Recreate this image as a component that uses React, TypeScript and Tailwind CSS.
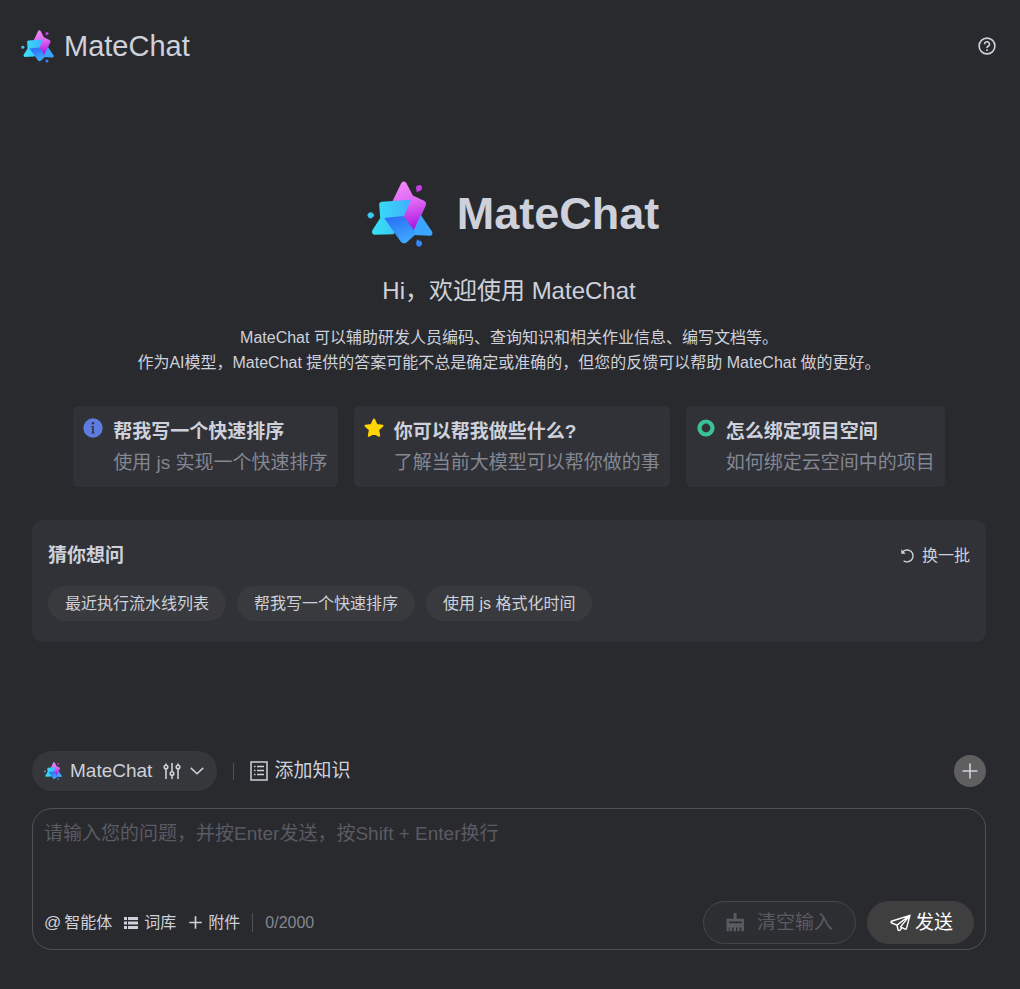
import { useId, useState } from "react";
import type { ReactNode } from "react";

function Logo({ className }: { className: string }) {
  const id = useId();
  return (
    <svg viewBox="0 0 198 200" className={className} aria-hidden="true">
      <defs>
        <linearGradient id={`${id}p`} gradientUnits="userSpaceOnUse" x1="105" y1="0" x2="140" y2="152">
          <stop offset="0" stopColor="#f488fc" />
          <stop offset="0.45" stopColor="#dd66f3" />
          <stop offset="1" stopColor="#a40fdf" />
        </linearGradient>
        <linearGradient id={`${id}c`} x1="0" y1="0" x2="1" y2="0">
          <stop offset="0" stopColor="#36e3f5" />
          <stop offset="1" stopColor="#3fb0fd" />
        </linearGradient>
        <linearGradient id={`${id}b`} x1="0.2" y1="0" x2="0.6" y2="1">
          <stop offset="0" stopColor="#2a6df5" />
          <stop offset="1" stopColor="#3ea9ff" />
        </linearGradient>
      </defs>
      <path
        d="M74 66 L103 6 Q110 -3 118 6 L138 44 L172 60 Q181 65 177 74 L142 152 L106 108 Z"
        fill={`url(#${id}p)`}
      />
      <path d="M36 72 Q36 64 44 63 L132 57 L110 110 L80 161 L22 163 Q12 161 15 150 L39 112 Z" fill={`url(#${id}c)`} />
      <path d="M162 103 L196 153 Q200 165 190 166 L138 164 L140 150 Z" fill="#3ba5ff" />
      <path d="M51 112 L110 106 L142 151 L144 164 L119 186 Q110 192 102 185 Z" fill={`url(#${id}b)`} />
      <path d="M148 17 Q150 12 158 12 Q167 13 166 23 Q164 31 156 31 L150 34 Q147 26 148 17 Z" fill="#c63bea" />
      <path d="M0 104 Q2 95 12 95 Q18 97 21 104 Q18 112 11 114 Q2 113 0 104 Z" fill="#3ac8f5" />
      <path d="M151 176 L155 180 Q166 180 166 190 Q164 199 156 199 Q147 197 148 187 Z" fill="#3488fb" />
    </svg>
  );
}

function InfoIcon() {
  return (
    <svg viewBox="0 0 20 20" className="size-5" aria-hidden="true">
      <circle cx="10" cy="10" r="9.7" fill="#5e7ce0" />
      <circle cx="10" cy="5.300" r="1.200" fill="#313237" />
      <path d="M8.300 8h2.500v6.600h.9v.9H8.300v-.9h.9V8.900h-.9z" fill="#313237" />
    </svg>
  );
}

function StarIcon() {
  return (
    <svg viewBox="0 0 20 20" className="size-5" aria-hidden="true">
      <path
        d="M10 1.500l2.500 5.400 6 .8-4.400 4.100 1.100 6-5.200-2.900-5.200 2.900 1.100-6L1.500 7.700l6-.8z"
        fill="#ffd500"
        stroke="#ffd500"
        strokeWidth="2"
        strokeLinejoin="round"
      />
    </svg>
  );
}

function RingIcon() {
  return (
    <svg viewBox="0 0 20 20" className="size-5" aria-hidden="true">
      <circle cx="10" cy="10" r="6.500" fill="none" stroke="#3ac295" strokeWidth="4.200" />
    </svg>
  );
}

function Glyph({ className, children }: { className: string; children: ReactNode }) {
  return (
    <svg
      viewBox="0 0 18 18"
      className={className}
      fill="none"
      stroke="currentColor"
      strokeWidth="1.600"
      aria-hidden="true"
    >
      {children}
    </svg>
  );
}

const cards = [
  { title: "帮我写一个快速排序", desc: "使用 js 实现一个快速排序", icon: <InfoIcon /> },
  { title: "你可以帮我做些什么?", desc: "了解当前大模型可以帮你做的事", icon: <StarIcon /> },
  { title: "怎么绑定项目空间", desc: "如何绑定云空间中的项目", icon: <RingIcon /> },
];

const prompts = ["最近执行流水线列表", "帮我写一个快速排序", "使用 js 格式化时间"];

export default function App() {
  const [text, setText] = useState("");
  return (
    <div className="flex min-h-screen flex-col bg-[#292a2e] font-['Liberation_Sans','Noto_Sans_CJK_SC',sans-serif] text-base text-[#ced1db]">
      <header className="flex items-center justify-between pt-[25px] pr-6 pb-[23px] pl-[21px]">
        <a href="#" className="flex items-center gap-[10px]">
          <Logo className="size-[33px]" />
          <span className="text-[29px] leading-[42px]">MateChat</span>
        </a>
        <button type="button" aria-label="帮助">
          <Glyph className="size-[18px]">
            <circle cx="9" cy="9" r="7.900" />
            <path d="M6.600 7.200a2.400 2.400 0 1 1 3.400 2.100c-.7.400-1 .8-1 1.800M9 12.200v1.700" />
          </Glyph>
        </button>
      </header>

      <main className="flex flex-1 flex-col pt-[91px] pr-[34px] pl-8">
        <div className="flex items-center justify-center gap-6 pl-2">
          <Logo className="size-[66px]" />
          <h1 className="text-[45px] leading-[66px] font-bold">MateChat</h1>
        </div>
        <h2 className="mt-[26px] text-center text-2xl leading-9">Hi，欢迎使用 MateChat</h2>
        <div className="mt-4 text-center leading-[25px]">
          <p>MateChat 可以辅助研发人员编码、查询知识和相关作业信息、编写文档等。</p>
          <p>作为AI模型，MateChat 提供的答案可能不总是确定或准确的，但您的反馈可以帮助 MateChat 做的更好。</p>
        </div>

        <div className="mt-[31px] flex flex-wrap justify-center gap-4">
          {cards.map((c) => (
            <button
              key={c.title}
              type="button"
              className="flex items-start gap-[10px] rounded-[5px] bg-[#313237] px-[10px] pt-[10px] pb-[9px] text-left text-[19px] leading-[31px]"
            >
              <span className="mt-[2px]">{c.icon}</span>
              <span className="flex flex-col">
                <span className="font-bold">{c.title}</span>
                <span className="text-[#838791]">{c.desc}</span>
              </span>
            </button>
          ))}
        </div>

        <section className="mt-[33px] rounded-[10px] bg-[#313237] px-4 pt-[21px] pb-[21px]">
          <div className="flex items-center justify-between leading-[30px]">
            <h3 className="text-[19px] font-bold">猜你想问</h3>
            <button type="button" className="flex items-center gap-[6px]">
              <Glyph className="size-4">
                <path d="M4 14.300a6.700 6.700 0 1 0-.6-10.300L2.200 5.500" />
                <path d="M1.500 1.500v5h5z" fill="currentColor" stroke="none" />
              </Glyph>
              换一批
            </button>
          </div>
          <div className="mt-[15px] flex flex-wrap gap-[11px]">
            {prompts.map((p) => (
              <button key={p} type="button" className="rounded-full bg-[#393a3d] px-[17px] leading-[35px]">
                {p}
              </button>
            ))}
          </div>
        </section>
      </main>

      <footer className="pt-6 pr-[34px] pb-[39px] pl-8">
        <div className="flex items-center justify-between text-[19px] leading-10">
          <div className="flex items-center">
            <button type="button" className="flex items-center rounded-full bg-[#36373a] px-3">
              <Logo className="size-[18px]" />
              <span className="ml-2">MateChat</span>
              <Glyph className="ml-[11px] size-[18px]">
                <path d="M3 1.500v1.500M3 7v10M9 1v8.500M9 13.500v3.500M15 1.500v1.500M15 7v10" />
                <circle cx="3" cy="5" r="1.800" />
                <circle cx="9" cy="11.500" r="1.800" />
                <circle cx="15" cy="5" r="1.800" />
              </Glyph>
              <Glyph className="ml-2 size-4">
                <path d="M2 5.500l7 6.500 7-6.500" />
              </Glyph>
            </button>
            <span className="mx-4 h-[17px] w-px bg-[#505155]" />
            <button type="button" className="flex items-center gap-[6px]">
              <svg viewBox="0 0 18 20" className="h-5 w-[18px]" fill="none" stroke="currentColor" strokeWidth="1.500" aria-hidden="true">
                <path d="M1 1h16v18H1zM4 5.500h1.500M7 5.500h7M4 9.500h1.500M7 9.500h7M4 13.500h1.500M7 13.500h7" />
              </svg>
              添加知识
            </button>
          </div>
          <button
            type="button"
            aria-label="新建对话"
            className="flex size-8 items-center justify-center rounded-full bg-[#5f5f60]"
          >
            <Glyph className="size-[18px]">
              <path d="M9 1.500v15M1.500 9h15" />
            </Glyph>
          </button>
        </div>

        <div className="mt-[17px] flex flex-col rounded-[20px] border border-[#505155] px-[11px] pt-[11px] pb-[5px]">
          <textarea
            aria-label="输入问题"
            maxLength={2000}
            value={text}
            onChange={(e) => setText(e.target.value)}
            placeholder="请输入您的问题，并按Enter发送，按Shift + Enter换行"
            className="block h-[81px] w-full resize-none bg-transparent text-[19px] leading-7 outline-none placeholder:text-[#5a5b62]"
          />
          <div className="flex items-center justify-between">
            <div className="flex items-center gap-3">
              <button type="button" className="flex items-center gap-[3px]">
                <span className="text-[17px]">@</span>智能体
              </button>
              <button type="button" className="flex items-center gap-[5px]">
                <svg viewBox="0 0 15 12" className="h-3 w-[15px]" fill="currentColor" aria-hidden="true">
                  <path d="M0 0h3v3H0zM4 0h10v3H4zM0 4.500h3v3H0zM4 4.500h10v3H4zM0 9h3v3H0zM4 9h10v3H4z" />
                </svg>
                词库
              </button>
              <button type="button" className="flex items-center gap-[5px]">
                <Glyph className="size-[15px]">
                  <path d="M9 1.500v15M1.500 9h15" strokeWidth="2" />
                </Glyph>
                附件
              </button>
              <span className="h-[19px] w-px bg-[#505155]" />
              <span className="text-[#838791]">{text.length}/2000</span>
            </div>
            <div className="flex gap-[11px] text-[19px] leading-[41px]">
              <button
                type="button"
                disabled={text.length === 0}
                onClick={() => setText("")}
                className="flex items-center gap-3 rounded-full border border-[#46474b] bg-[#2d2e32] px-[22px] text-[#5a5b62]"
              >
                <svg viewBox="0 0 18 18" className="size-[19px]" fill="currentColor" aria-hidden="true">
                  <path d="M7.300 0h2.700v5.500H17V17.300h-2.400v-3.600h-1.600v3.600h-2.200v-3.600H9.500v3.600H7.200v-3.600H5.700v3.600H3.500v-3.600H2.700v3.600H.5V5.500h6.800z" />
                  <path d="M2.800 8h12v1.700h-12z" fill="#2d2e32" />
                </svg>
                清空输入
              </button>
              <button
                type="button"
                className="flex items-center gap-1 rounded-full border border-[#3f3f40] bg-[#3f3f40] px-[22px] pr-5 text-white"
              >
                <svg
                  viewBox="0 0 60 50"
                  className="h-[18px] w-[21px]"
                  fill="none"
                  stroke="currentColor"
                  strokeWidth="4"
                  strokeLinejoin="round"
                  strokeLinecap="round"
                  aria-hidden="true"
                >
                  <path d="M57 3L4 20Q1 23 5 25L20 31L57 3L47 41Q45 44 42 42L30 36L57 3M20 31L23 45Q26 48 29 45L34 39" />
                </svg>
                发送
              </button>
            </div>
          </div>
        </div>
      </footer>
    </div>
  );
}
